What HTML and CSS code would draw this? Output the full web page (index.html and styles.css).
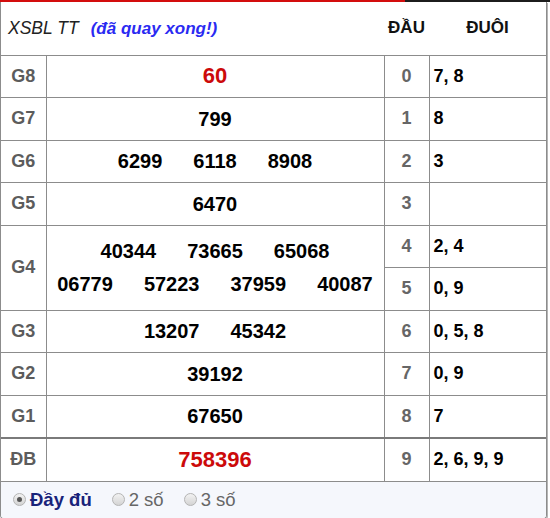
FILE: index.html
```html
<!DOCTYPE html>
<html lang="vi">
<head>
<meta charset="utf-8">
<title>XSBL TT</title>
<link rel="stylesheet" href="styles.css">
</head>
<body>
<div class="topbar"><span class="seg-red"></span><span class="seg-dark"></span></div>
<div class="box">
  <table class="kq">
    <colgroup>
      <col class="c-g"><col class="c-num"><col class="c-dau"><col class="c-duoi">
    </colgroup>
    <thead>
      <tr>
        <th colspan="2" class="title"><span class="name">XSBL TT</span><span class="status">(đã quay xong!)</span></th>
        <th class="h-dau">ĐẦU</th>
        <th class="h-duoi">ĐUÔI</th>
      </tr>
    </thead>
    <tbody>
      <tr>
        <td class="g">G8</td>
        <td class="num"><div class="line"><span class="red">60</span></div></td>
        <td class="dau">0</td><td class="duoi">7, 8</td>
      </tr>
      <tr>
        <td class="g">G7</td>
        <td class="num"><div class="line"><span>799</span></div></td>
        <td class="dau">1</td><td class="duoi">8</td>
      </tr>
      <tr>
        <td class="g">G6</td>
        <td class="num"><div class="line"><span>6299</span><span>6118</span><span>8908</span></div></td>
        <td class="dau">2</td><td class="duoi">3</td>
      </tr>
      <tr>
        <td class="g">G5</td>
        <td class="num"><div class="line"><span>6470</span></div></td>
        <td class="dau">3</td><td class="duoi"></td>
      </tr>
      <tr>
        <td class="g" rowspan="2">G4</td>
        <td class="num" rowspan="2">
          <div class="lines">
            <div class="line"><span>40344</span><span>73665</span><span>65068</span></div>
            <div class="line"><span>06779</span><span>57223</span><span>37959</span><span>40087</span></div>
          </div>
        </td>
        <td class="dau">4</td><td class="duoi">2, 4</td>
      </tr>
      <tr>
        <td class="dau">5</td><td class="duoi">0, 9</td>
      </tr>
      <tr>
        <td class="g">G3</td>
        <td class="num"><div class="line"><span>13207</span><span>45342</span></div></td>
        <td class="dau">6</td><td class="duoi">0, 5, 8</td>
      </tr>
      <tr>
        <td class="g">G2</td>
        <td class="num"><div class="line"><span>39192</span></div></td>
        <td class="dau">7</td><td class="duoi">0, 9</td>
      </tr>
      <tr>
        <td class="g">G1</td>
        <td class="num"><div class="line"><span>67650</span></div></td>
        <td class="dau">8</td><td class="duoi">7</td>
      </tr>
      <tr class="db">
        <td class="g">ĐB</td>
        <td class="num"><div class="line"><span class="red">758396</span></div></td>
        <td class="dau">9</td><td class="duoi">2, 6, 9, 9</td>
      </tr>
    </tbody>
  </table>
  <div class="footer">
    <label class="opt active"><span class="radio checked"></span>Đầy đủ</label>
    <label class="opt"><span class="radio"></span>2 số</label>
    <label class="opt"><span class="radio"></span>3 số</label>
  </div>
</div>
</body>
</html>
```

FILE: styles.css
```css
html, body {
  margin: 0;
  padding: 0;
  background: #fff;
}
body {
  width: 550px;
  height: 518px;
  overflow: hidden;
  font-family: "Liberation Sans", Arial, sans-serif;
}
.topbar {
  display: flex;
  height: 2px;
}
.seg-red {
  width: 405px;
  background: #d30d0d;
}
.seg-dark {
  flex: 1;
  background: #1c1c1c;
}
.box {
  width: 547px;
  box-sizing: border-box;
  border: 1px solid #8c8c8c;
  border-top: none;
  border-radius: 0 0 4px 4px;
  box-shadow: 1px 1px 0 #b5b5b5;
  overflow: hidden;
}
.kq {
  width: 545px;
  border-collapse: collapse;
  table-layout: fixed;
}
.c-g { width: 45px; }
.c-num { width: 338px; }
.c-dau { width: 45px; }
.c-duoi { width: 117px; }

.kq th {
  height: 52.5px;
  padding: 0;
  font-weight: bold;
  font-size: 17px;
  color: #111;
  vertical-align: middle;
}
.kq th.title {
  text-align: left;
  padding-left: 7px;
}
.name {
  font-style: italic;
  font-weight: normal;
  color: #222;
  font-size: 17.5px;
}
.status {
  font-style: italic;
  font-weight: bold;
  color: #2a2af2;
  font-size: 17px;
  margin-left: 12px;
}
.h-dau, .h-duoi {
  text-align: center;
}
.kq td {
  height: 41.5px;
  padding: 0;
  border-top: 1px solid #8c8c8c;
  font-weight: bold;
  vertical-align: middle;
}
.kq td.g, .kq td.num, .kq td.dau {
  border-right: 1px solid #8c8c8c;
}
.kq tr.db td {
  border-top: 2px solid #7a7a7a;
}
.g {
  text-align: center;
  font-size: 18px;
  color: #5c5c5c;
}
.dau {
  text-align: center;
  font-size: 18px;
  color: #666;
}
.duoi {
  padding-left: 4px !important;
  font-size: 18px;
  color: #000;
}
.lines {
  display: flex;
  flex-direction: column;
  row-gap: 11px;
}
.line {
  display: flex;
  justify-content: center;
  column-gap: 31px;
  font-size: 20px;
  line-height: 22px;
  color: #000;
}
.line .red {
  color: #cc0a0a;
  font-size: 22px;
}
.footer {
  height: 36px;
  border-top: 1px solid #8c8c8c;
  background: #f5f7fc;
  display: flex;
  align-items: center;
  padding-left: 12px;
  gap: 20px;
  font-size: 18.5px;
  color: #666;
}
.opt {
  display: flex;
  align-items: center;
  gap: 4px;
}
.opt.active {
  font-weight: bold;
  color: #18237a;
}
.radio {
  width: 11px;
  height: 11px;
  border-radius: 50%;
  border: 1px solid #b4b4b4;
  background: linear-gradient(#f2f2f2, #d4d4d4);
  position: relative;
}
.radio.checked::after {
  content: "";
  position: absolute;
  left: 3px;
  top: 3px;
  width: 5px;
  height: 5px;
  border-radius: 50%;
  background: #555;
}
```
